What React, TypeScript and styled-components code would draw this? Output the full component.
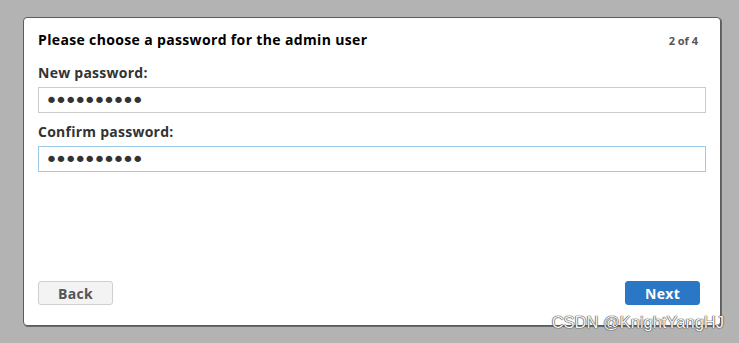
import React from "react";
import styled, { createGlobalStyle } from "styled-components";

const GlobalStyle = createGlobalStyle`
  html, body {
    margin: 0;
    padding: 0;
    background: #b3b3b3;
    font-family: "Open Sans", Lato, Arial, sans-serif;
  }
`;

const Page = styled.div`
  position: relative;
  width: 739px;
  height: 343px;
  padding: 17px 0 0 23px;
  box-sizing: border-box;
`;

const Dialog = styled.div`
  width: 698px;
  height: 309px;
  box-sizing: border-box;
  background: #fff;
  border: 1px solid #5c5c5c;
  border-radius: 4px;
  box-shadow: 1px 1px 0 #6a6a6a;
  padding: 12px 14px 20px 14px;
  display: flex;
  flex-direction: column;
`;

const Header = styled.div`
  display: flex;
  justify-content: space-between;
  align-items: baseline;
  height: 26px;
`;

const Title = styled.h1`
  margin: 0;
  font-size: 14px;
  font-weight: 700;
  color: #000;
  letter-spacing: 0.35px;
`;

const Step = styled.span`
  font-size: 11px;
  font-weight: 700;
  color: #555;
  margin-right: 8px;
`;

const Field = styled.div`
  display: flex;
  flex-direction: column;
  gap: 5px;
  margin-top: 8px;

  & + & {
    margin-top: 10px;
  }
`;

const Label = styled.label`
  font-size: 14px;
  font-weight: 700;
  color: #333;
  line-height: 18px;
  letter-spacing: 0.25px;
`;

const Input = styled.input<{ $focused?: boolean }>`
  width: 668px;
  height: 26px;
  box-sizing: border-box;
  border: 1px solid ${(p) => (p.$focused ? "#9ecaea" : "#cccccc")};
  outline: none;
  padding: 0 6px;
  font-family: "DejaVu Sans", Arial, sans-serif;
  font-size: 22px;
  letter-spacing: -3.4px;
  color: #333;
  background: #fff;
`;

const Footer = styled.div`
  margin-top: auto;
  display: flex;
  justify-content: space-between;
  padding-right: 6px;
`;

const Button = styled.button<{ $primary?: boolean }>`
  width: 75px;
  height: 24px;
  box-sizing: border-box;
  border-radius: 3px;
  border: 1px solid ${(p) => (p.$primary ? "#2a77c5" : "#cfcfcf")};
  background: ${(p) => (p.$primary ? "#2a77c5" : "#f3f3f3")};
  color: ${(p) => (p.$primary ? "#fff" : "#555")};
  font-family: "Open Sans", Lato, Arial, sans-serif;
  font-size: 14px;
  font-weight: 700;
  letter-spacing: 0.3px;
  padding: 0;
  cursor: pointer;
`;

const Watermark = styled.span`
  position: absolute;
  right: 15px;
  bottom: 11px;
  font-family: "Liberation Sans", Arial, sans-serif;
  font-size: 16.5px;
  color: #f4f4f4;
  text-shadow: 0 0 1px #444, 0 0 1px #444, 0 0 1px #444;
`;

export default function App() {
  return (
    <Page>
      <GlobalStyle />
      <Dialog>
        <Header>
          <Title>Please choose a password for the admin user</Title>
          <Step>2 of 4</Step>
        </Header>
        <Field>
          <Label>New password:</Label>
          <Input type="password" defaultValue="adminpass1" />
        </Field>
        <Field>
          <Label>Confirm password:</Label>
          <Input type="password" defaultValue="adminpass1" $focused />
        </Field>
        <Footer>
          <Button>Back</Button>
          <Button $primary>Next</Button>
        </Footer>
      </Dialog>
      <Watermark>CSDN @KnightYangHJ</Watermark>
    </Page>
  );
}
